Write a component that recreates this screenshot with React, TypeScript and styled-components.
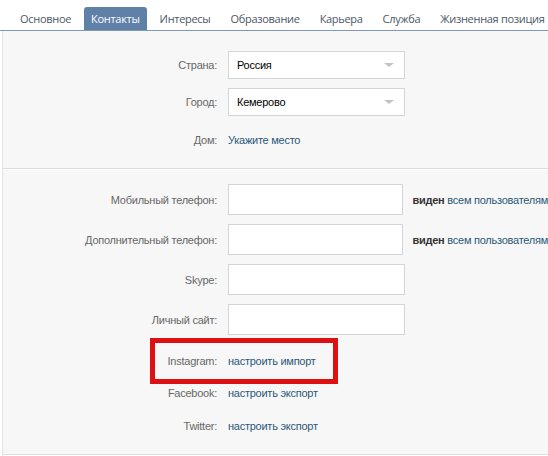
import * as React from "react";
import styled, { createGlobalStyle } from "styled-components";

const GlobalStyle = createGlobalStyle`
  html, body {
    margin: 0;
    padding: 0;
    background: #ffffff;
    overflow: hidden;
  }
  body {
    font-family: "Liberation Sans", Arial, sans-serif;
    font-size: 11px;
    letter-spacing: -0.25px;
  }
`;

const tabs = ["Основное", "Контакты", "Интересы", "Образование", "Карьера", "Служба", "Жизненная позиция"];

function App() {
  return (
    <>
      <GlobalStyle />
      <Page>
        <TabBar>
          {tabs.map((t) => (
            <Tab key={t} $active={t === "Контакты"}>
              {t}
            </Tab>
          ))}
        </TabBar>

        <Panel>
          <Section $top={20} $bottom={14}>
            <Row $height={28}>
              <Label>Страна:</Label>
              <Select>
                <span>Россия</span>
                <Arrow />
              </Select>
            </Row>
            <Row $height={28} $gap={9}>
              <Label>Город:</Label>
              <Select>
                <span>Кемерово</span>
                <Arrow />
              </Select>
            </Row>
            <Row $height={28} $gap={10}>
              <Label>Дом:</Label>
              <Link>Укажите место</Link>
            </Row>
          </Section>

          <Section $top={15} $bottom={14}>
            <Row $height={31}>
              <Label>Мобильный телефон:</Label>
              <Input />
              <Privacy>
                <b>виден</b> <Link>всем пользователям</Link>
              </Privacy>
            </Row>
            <Row $height={31} $gap={9}>
              <Label>Дополнительный телефон:</Label>
              <Input />
              <Privacy>
                <b>виден</b> <Link>всем пользователям</Link>
              </Privacy>
            </Row>
            <Row $height={31} $gap={9}>
              <Label>Skype:</Label>
              <Input />
            </Row>
            <Row $height={31} $gap={9}>
              <Label>Личный сайт:</Label>
              <Input />
            </Row>
            <Row $height={28} $gap={12}>
              <Highlight />
              <Label>Instagram:</Label>
              <Link>настроить импорт</Link>
            </Row>
            <Row $height={28} $gap={4}>
              <Label>Facebook:</Label>
              <Link>настроить экспорт</Link>
            </Row>
            <Row $height={28} $gap={5}>
              <Label>Twitter:</Label>
              <Link>настроить экспорт</Link>
            </Row>
          </Section>
        </Panel>
      </Page>
    </>
  );
}

const Page = styled.div`
  width: 548px;
  height: 456px;
  overflow: hidden;
  background: #ffffff;
`;

const TabBar = styled.div`
  display: flex;
  align-items: flex-end;
  height: 30px;
  padding-left: 13px;
  gap: 6px;
  border-bottom: 1px solid #7f98b3;
  white-space: nowrap;
`;

const Tab = styled.div<{ $active?: boolean }>`
  height: 23px;
  line-height: 24px;
  padding: 0 7px;
  border-radius: 3px 3px 0 0;
  font-family: "Open Sans", "Noto Sans", sans-serif;
  font-size: 11px;
  letter-spacing: -0.3px;
  color: ${(p) => (p.$active ? "#ffffff" : "#4b5866")};
  background: ${(p) => (p.$active ? "#5f81a8" : "transparent")};
`;

const Panel = styled.div`
  margin-left: 2px;
  border-left: 1px solid #e1e3e6;
  background: #f7f7f7;
  height: 100%;
`;

const Section = styled.div<{ $top: number; $bottom: number }>`
  display: flex;
  flex-direction: column;
  padding: ${(p) => p.$top}px 0 ${(p) => p.$bottom}px;
  border-bottom: 1px solid #dcdcdc;
  box-shadow: 0 1px 0 #ffffff;
`;

const Row = styled.div<{ $height: number; $gap?: number }>`
  position: relative;
  display: flex;
  align-items: center;
  height: ${(p) => p.$height}px;
  margin-top: ${(p) => p.$gap ?? 0}px;
  white-space: nowrap;
`;

const Label = styled.div`
  width: 225px;
  flex: none;
  text-align: right;
  padding-right: 11px;
  box-sizing: border-box;
  color: #676767;
  position: relative;
`;

const Link = styled.span`
  color: #2b587a;
  position: relative;
`;

const fieldBox = `
  width: 177px;
  height: 100%;
  box-sizing: border-box;
  border: 1px solid #d2d6da;
  background: #ffffff;
`;

const Select = styled.div`
  ${fieldBox}
  display: flex;
  align-items: center;
  justify-content: space-between;
  padding: 0 10px 0 8px;
  color: #000000;
`;

const Arrow = styled.div`
  width: 0;
  height: 0;
  border-left: 5px solid transparent;
  border-right: 5px solid transparent;
  border-top: 4px solid #c4c4c4;
`;

const Input = styled.div`
  ${fieldBox}
`;

const Privacy = styled.div`
  margin-left: 9px;
  color: #222222;

  b {
    font-weight: bold;
    color: #333333;
  }
`;

const Highlight = styled.div`
  position: absolute;
  left: 147px;
  top: -9px;
  width: 188px;
  height: 46px;
  box-sizing: border-box;
  border: 5px solid #dd1111;
`;

export default App;
